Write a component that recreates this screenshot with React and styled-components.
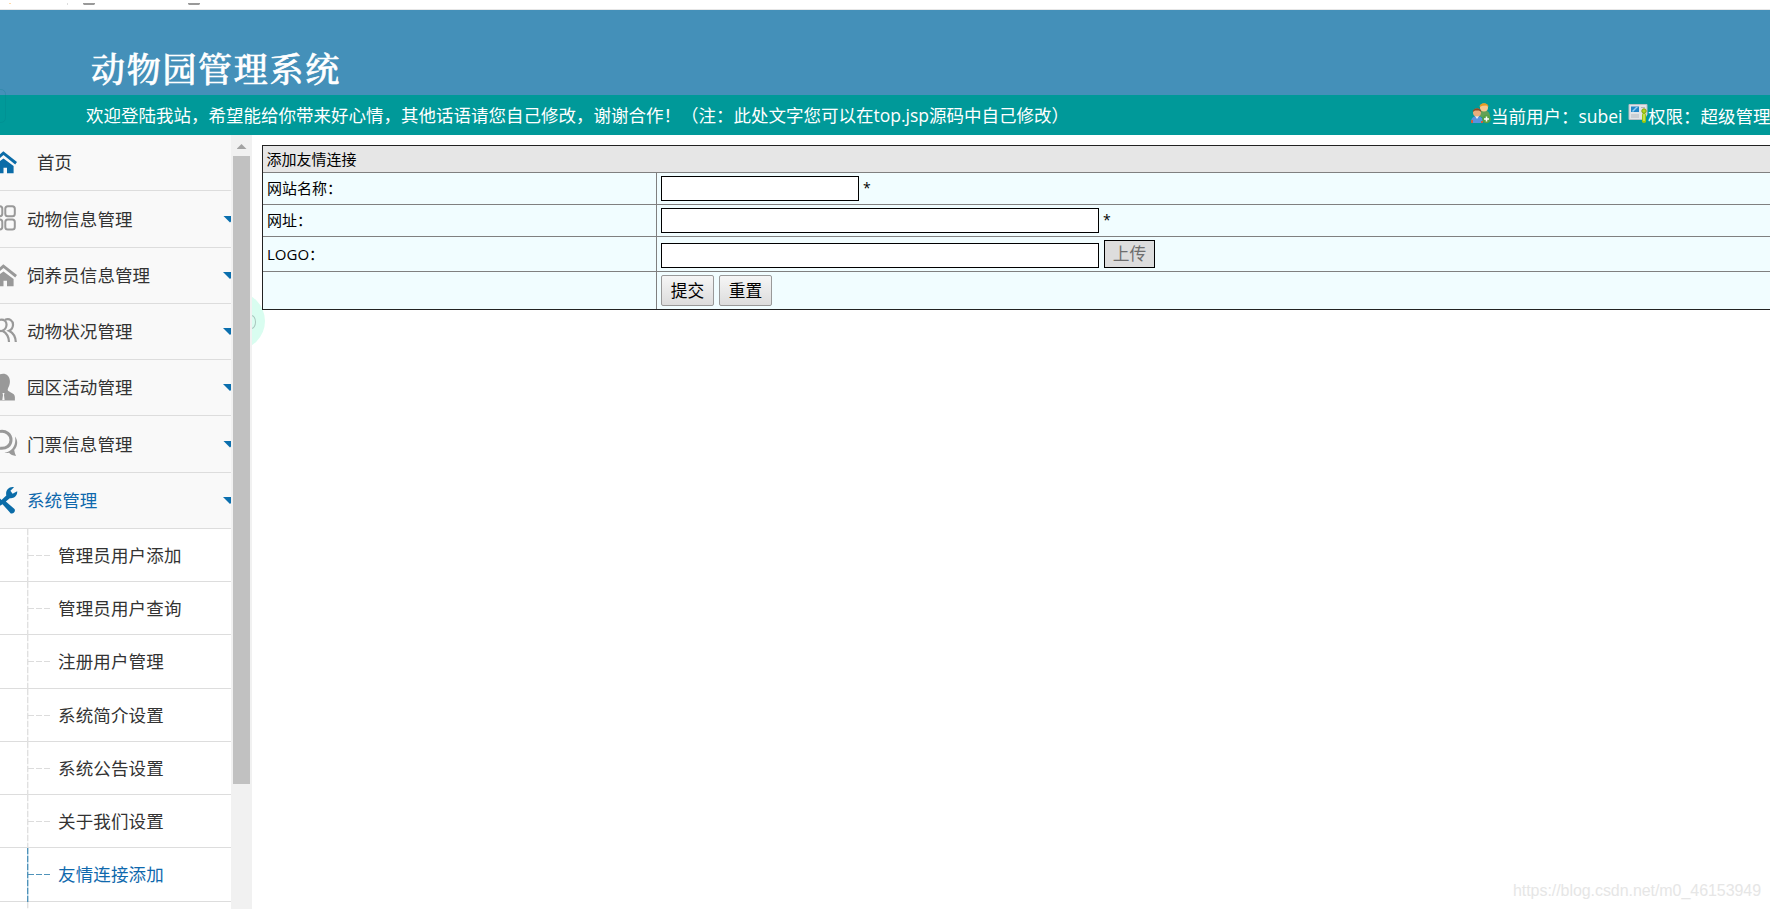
import React from "react";
import styled, { createGlobalStyle } from "styled-components";

const GlobalStyle = createGlobalStyle`
  * {
    box-sizing: border-box;
  }
  body {
    margin: 0;
    background: #fff;
    overflow: hidden;
    font-family: "Open Sans", "Noto Sans CJK SC", sans-serif;
  }
`;

const Page = styled.div`
  position: relative;
  width: 100%;
  height: 909px;
  overflow: hidden;
  display: flex;
  flex-direction: column;
`;

const TopStrip = styled.div`
  flex: none;
  height: 10px;
  border-bottom: 1px solid #e6e6e6;
  line-height: 0;
`;

const Header = styled.header`
  flex: none;
  height: 85px;
  padding: 32px 0 0 91px;
  background: #4490b9;
`;

const Title = styled.h1`
  margin: 0;
  color: #fff;
  font-family: "Noto Serif CJK SC", "Source Han Serif SC", "Noto Sans CJK SC", serif;
  font-size: 34px;
  font-weight: 500;
  letter-spacing: 1.7px;
  line-height: 52px;
  white-space: nowrap;
  -webkit-text-stroke: 0.6px #fff;
`;

const NoticeBar = styled.div`
  flex: none;
  position: relative;
  display: flex;
  justify-content: space-between;
  height: 40px;
  padding-left: 86px;
  background: #009999;
  color: #fff;
  font-size: 17.5px;
  line-height: 40px;
  white-space: nowrap;
`;

const EdgeTab = styled.div`
  position: absolute;
  left: -6px;
  top: -6px;
  width: 12px;
  height: 34px;
  border: 1px solid rgba(0, 120, 130, 0.2);
  border-radius: 5px;
`;

const UserInfo = styled.div`
  display: flex;
  flex: none;
  width: 299px;
  line-height: 42px;

  svg {
    flex: none;
    margin-top: 8px;
  }
`;

const UserName = styled.span`
  flex: none;
  width: 137px;
`;

const Main = styled.div`
  flex: 1;
  display: flex;
  min-height: 0;
`;

const Sidebar = styled.nav`
  flex: none;
  width: 231px;
  overflow: hidden;
  background: #f9f9f9;
  z-index: 1;
`;

const MenuItem = styled.div`
  display: flex;
  align-items: center;
  height: ${(props) => props.$height}px;
  padding-bottom: 2px;
  border-bottom: 1px solid #ddd;
  color: ${(props) => (props.$active ? "#0f69ad" : "#333")};
  font-size: 17.5px;
  letter-spacing: 0.1px;
  white-space: nowrap;
`;

const IconSlot = styled.span`
  flex: none;
  display: flex;
  width: ${(props) => (props.$wide ? 37 : 27)}px;
`;

const Caret = styled.span`
  flex: none;
  width: 14px;
  height: 7px;
  margin: 2px -6px 0 auto;
  background: #0b6fae;
  clip-path: polygon(0 0, 100% 0, 50% 100%);
`;

const SubItem = styled.div`
  position: relative;
  height: ${(props) => props.$height}px;
  padding-left: 58px;
  border-bottom: 1px solid #ddd;
  background: #fff;
  color: ${(props) => (props.$active ? "#0f69ad" : "#333")};
  font-size: 17.5px;
  letter-spacing: 0.15px;
  line-height: 52px;
  white-space: nowrap;

  &::before {
    content: "";
    position: absolute;
    left: 27px;
    top: 0;
    width: 2px;
    height: 54px;
    background: repeating-linear-gradient(
      ${(props) => (props.$active ? "#4f93ba 0 6px, #b5d5e8 6px 8px" : "#e0e0e0 0 6px, #f7f7f7 6px 8px")}
    );
    clip-path: inset(0 0.6px 0 0);
  }

  &::after {
    content: "";
    position: absolute;
    left: 28px;
    top: 26px;
    width: 22px;
    height: 1px;
    background: repeating-linear-gradient(
      90deg,
      ${(props) => (props.$active ? "#4f93ba" : "#dcdcdc")} 0 6px,
      transparent 6px 8px
    );
  }
`;

const Scrollbar = styled.div`
  flex: none;
  display: flex;
  flex-direction: column;
  align-items: center;
  width: 21px;
  padding: 9px 0 0;
  background: #f1f1f1;
  z-index: 1;
`;

const ScrollArrow = styled.div`
  width: 10px;
  height: 5px;
  background: #a3a3a3;
  clip-path: polygon(50% 0, 100% 100%, 0 100%);
`;

const ScrollThumb = styled.div`
  width: 17px;
  height: 628px;
  margin-top: 7px;
  background: #c1c1c1;
`;

const Content = styled.main`
  flex: 1;
  min-width: 0;
  position: relative;
  padding: 10px 0 0 10px;
`;

const Bubble = styled.div`
  position: absolute;
  left: -45px;
  top: 157px;
  width: 58px;
  height: 58px;
  border-radius: 50%;
  background: #d9fdf0;

  &::after {
    content: "";
    position: absolute;
    left: 40px;
    top: 23px;
    width: 7px;
    height: 12px;
    border: 1px solid #a9c6bd;
    border-radius: 50%;
  }
`;

const FormTable = styled.form`
  position: relative;
  width: 1520px;
  border: 1px solid #222;
  background: #f1fdff;
  color: #000;
  font-size: 15px;
`;

const TableTitle = styled.div`
  height: 27px;
  padding-left: 3.5px;
  border-bottom: 1px solid #808080;
  background: #e6e6e6;
  line-height: 26px;
`;

const Row = styled.div`
  display: grid;
  grid-template-columns: 394px 1fr;
  height: ${(props) => props.$height}px;
  border-bottom: ${(props) => (props.$last ? "none" : "1px solid #808080")};
`;

const LabelCell = styled.label`
  display: flex;
  align-items: center;
  padding: 0 0 2px 4px;
  border-right: 1px solid #808080;
`;

const FieldCell = styled.div`
  display: flex;
  align-items: ${(props) => props.$align || "center"};
  gap: 5px;
  padding: 3px 4px;
`;

const TextInput = styled.input`
  width: ${(props) => props.$width}px;
  height: 25px;
  padding: 1px 2px;
  border: 1px solid #000;
  background: #fff;
  outline: none;
`;

const Star = styled.span`
  margin-left: -1px;
  padding-bottom: 2px;
  font-size: 14px;
  line-height: 22px;
`;

const UploadButton = styled.button`
  width: 51px;
  height: 28px;
  padding: 0;
  border: 1px solid #000;
  background: #ddd;
  color: #6d6d6d;
  font-family: inherit;
  font-size: 16.7px;
  line-height: 26px;
`;

const FormButton = styled.button`
  width: 53px;
  height: 31px;
  padding: 0;
  border: 1px solid #999;
  border-radius: 2px;
  background: linear-gradient(#f6f6f6, #dcdcdc);
  color: #000;
  font-family: inherit;
  font-size: 16.7px;
  line-height: 29px;
`;

const Watermark = styled.div`
  position: absolute;
  right: 9px;
  bottom: 7px;
  color: #e6e6e6;
  font-family: "Liberation Sans", Arial, sans-serif;
  font-size: 16px;
  letter-spacing: -0.06px;
  line-height: 22px;
`;

const HomeIcon = ({ color }) => (
  <svg width="18" height="24" viewBox="0 0 18 24" fill={color}>
    <path d="M3.500 8.400 13.600 16v7.200H7v-5.400H3.500v5.400H0V11z" />
    <path d="M0 4.200 3.300 1.200 17 12l-1.800 2.400L3.500 5.100 0 7.900z" />
  </svg>
);

const GridIcon = ({ color }) => (
  <svg width="18" height="26" viewBox="0 0 18 26" fill="none" stroke={color} strokeWidth="2">
    <rect x="-6" y="1.200" width="8.300" height="10" rx="2.500" />
    <rect x="5.300" y="1.200" width="9.500" height="10" rx="2.500" />
    <rect x="-6" y="14.500" width="8.300" height="10" rx="2.500" />
    <rect x="5.300" y="14.500" width="9.500" height="10" rx="2.500" />
  </svg>
);

const GroupIcon = ({ color }) => (
  <svg width="18" height="25" viewBox="0 0 18 25" fill="none" stroke={color} strokeWidth="2.200">
    <path d="M0 1.800c4-.8 6.800 1.600 6.500 5.200C6.300 10 4.800 11.800 2.500 12.800 6.500 15 8.800 19 9 24" />
    <path d="M5 1.800c4.500-1.800 8.200.8 8 5.200-.2 3-1.500 4.800-4 5.800 4 2 6.500 6 6.800 11.200" />
    <path d="M0 13h4" />
  </svg>
);

const PersonIcon = ({ color }) => (
  <svg width="18" height="28" viewBox="0 0 18 28" fill={color}>
    <path d="M0 1.200C5-.5 9.800 2 9.900 8c.1 5-2 6.500-2.200 9 .2 2 7.200 2.700 7.200 7v3.500H0z" />
    <path d="M2.500 20h2l-.5 2 .6 5H2.300l.7-5z" fill="#f9f9f9" />
  </svg>
);

const ChatIcon = ({ color }) => (
  <svg width="18" height="28" viewBox="0 0 18 28">
    <path d="M0 2.500c6-1 11 2.800 11 8.500S6 20 0 19.200" fill="none" stroke={color} strokeWidth="3" />
    <path d="M15 7.500c3.500 4.500 2.500 10-.8 13.500.2 2 .9 4 1.800 6-3-.3-5.500-1.500-7-3.200-1.500.4-3 .4-4.500 0 8-1 12-8 10.500-16.300z" fill={color} />
  </svg>
);

const ToolsIcon = ({ color }) => (
  <svg width="18" height="28" viewBox="0 0 18 28" fill={color}>
    <path d="M0 12.500 1.500 14 6.300 9.500C5.200 4.500 8.800.2 14 1.200l-3.600 3.600 2.200 3 4.600-2.600c.4 5-3.800 7.800-7.400 7L5.800 15.600l8.700 7.300c1.500 2.200-1 5.500-3.700 4.500L2.500 18.200 0 19.800z" />
  </svg>
);

const UsersAddIcon = () => (
  <svg width="20" height="21" viewBox="0 0 20 21">
    <path d="M8 13c0-5 2-6 5-6s6 2 6 7l-4 2z" fill="#62a157" />
    <circle cx="13" cy="4.500" r="4" fill="#f7c890" />
    <path d="M8.500 4c0-5 9-5 9 0l-2-1.500-4 .3z" fill="#e79a1f" />
    <path d="M0 20c0-5 2-7 6-7s6 2 6 7z" fill="#5793e0" />
    <path d="M4 13h4l-2 3z" fill="#e8f1fb" />
    <path d="M0 17h2v3H0zM10 18h2v2h-2z" fill="#cf5e3c" />
    <circle cx="6" cy="9.500" r="4" fill="#e9ad7c" />
    <path d="M1.800 9c0-5 8.500-5 8.500 0L8 7.600H4z" fill="#8a4a25" />
    <circle cx="15.500" cy="16" r="4.300" fill="#56a145" />
    <path d="M15.500 13.500v5M13 16h5" stroke="#fff" strokeWidth="1.500" />
  </svg>
);

const TerminalIcon = () => (
  <svg width="20" height="21" viewBox="0 0 20 21">
    <path d="M1 1.500h18v10l-3 5H1z" fill="#e1e4e8" stroke="#b8bec5" />
    <rect x="3" y="3.500" width="8" height="5.500" fill="#2186c7" />
    <path d="m4 8 4-4h2L5 9z" fill="#8bd0f5" />
    <path d="M3 12h8M3 14h8M13 4.500h4" stroke="#b3b8be" />
    <rect x="14" y="10" width="4" height="10" rx="1.800" fill="#9bc60d" />
    <circle cx="16" cy="8" r="2.200" fill="#b2d51d" stroke="#7da012" />
    <path d="M16 11v7" stroke="#e7f59b" />
  </svg>
);

const BookmarkRemains = () => (
  <svg width="220" height="3" viewBox="0 0 220 3">
    <path d="M83 0h12v1l-1 1H84l-1-1zM188 0h12v1l-1 1h-10l-1-1z" fill="#999" />
    <path d="M67 0h1v2h-1z" fill="#ddd" />
    <path d="M9 0h2v1H9z" fill="#ffd9a8" />
  </svg>
);

const menu = [
  { text: "首页", icon: HomeIcon, height: 56, color: "#0b6ca8", home: true },
  { text: "动物信息管理", icon: GridIcon, height: 57 },
  { text: "饲养员信息管理", icon: HomeIcon, height: 56 },
  { text: "动物状况管理", icon: GroupIcon, height: 56 },
  { text: "园区活动管理", icon: PersonIcon, height: 56 },
  { text: "门票信息管理", icon: ChatIcon, height: 57 },
  { text: "系统管理", icon: ToolsIcon, height: 56, color: "#0b6ca8", active: true },
];

const subMenu = [
  { text: "管理员用户添加", height: 53 },
  { text: "管理员用户查询", height: 53 },
  { text: "注册用户管理", height: 54 },
  { text: "系统简介设置", height: 53 },
  { text: "系统公告设置", height: 53 },
  { text: "关于我们设置", height: 53 },
  { text: "友情连接添加", height: 54, active: true },
  { text: "", height: 53 },
];

const App = () => {
  return (
    <Page>
      <GlobalStyle />
      <TopStrip>
        <BookmarkRemains />
      </TopStrip>
      <Header>
        <Title>动物园管理系统</Title>
      </Header>
      <NoticeBar>
        <EdgeTab />
        <span>欢迎登陆我站，希望能给你带来好心情，其他话语请您自己修改，谢谢合作！（注：此处文字您可以在top.jsp源码中自己修改）</span>
        <UserInfo>
          <UsersAddIcon />
          <UserName>当前用户：subei</UserName>
          <TerminalIcon />
          <span>权限：超级管理</span>
        </UserInfo>
      </NoticeBar>
      <Main>
        <Sidebar>
          {menu.map(({ text, icon: Icon, height, color, home, active }) => (
            <MenuItem key={text} $height={height} $active={active}>
              <IconSlot $wide={home}>
                <Icon color={color || "#999"} />
              </IconSlot>
              {text}
              {!home && <Caret />}
            </MenuItem>
          ))}
          {subMenu.map(({ text, height, active }) => (
            <SubItem key={text} $height={height} $active={active}>
              {text}
            </SubItem>
          ))}
        </Sidebar>
        <Scrollbar>
          <ScrollArrow />
          <ScrollThumb />
        </Scrollbar>
        <Content>
          <Bubble />
          <FormTable onSubmit={(e) => e.preventDefault()}>
            <TableTitle>添加友情连接</TableTitle>
            <Row $height={32}>
              <LabelCell>网站名称：</LabelCell>
              <FieldCell>
                <TextInput $width={198} />
                <Star>*</Star>
              </FieldCell>
            </Row>
            <Row $height={32}>
              <LabelCell>网址：</LabelCell>
              <FieldCell>
                <TextInput $width={438} />
                <Star>*</Star>
              </FieldCell>
            </Row>
            <Row $height={35}>
              <LabelCell>LOGO：</LabelCell>
              <FieldCell $align="flex-end">
                <TextInput $width={438} />
                <UploadButton type="button">上传</UploadButton>
              </FieldCell>
            </Row>
            <Row $height={37} $last>
              <LabelCell />
              <FieldCell>
                <FormButton type="submit">提交</FormButton>
                <FormButton type="reset">重置</FormButton>
              </FieldCell>
            </Row>
          </FormTable>
        </Content>
      </Main>
      <Watermark>https://blog.csdn.net/m0_46153949</Watermark>
    </Page>
  );
};

export default App;
